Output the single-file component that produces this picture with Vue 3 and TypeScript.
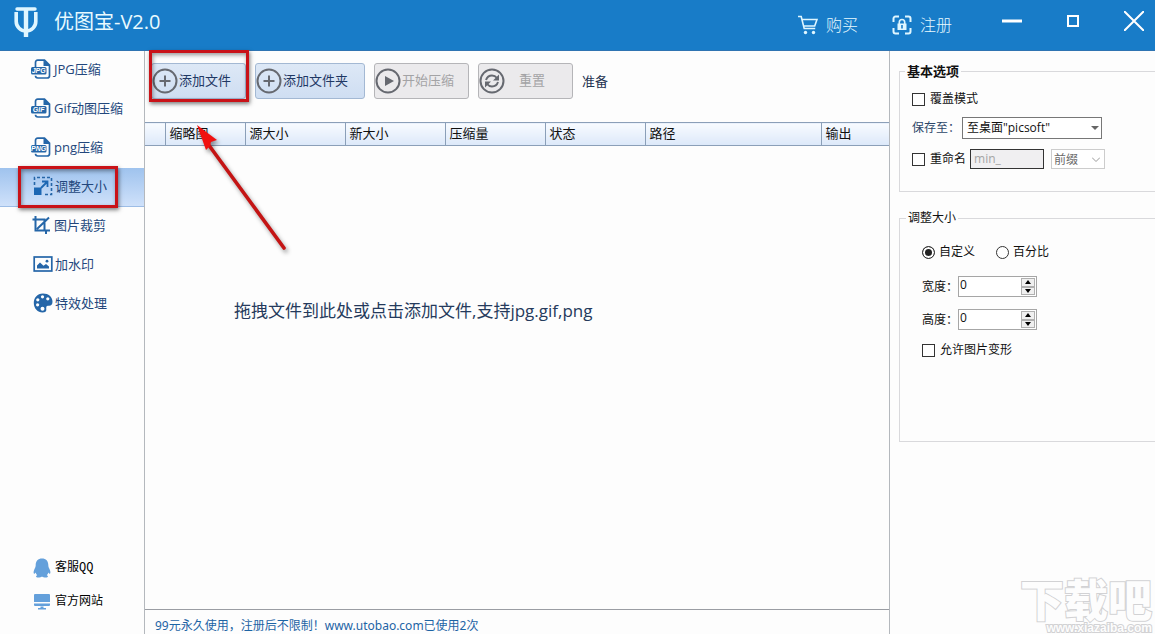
<script setup lang="ts">
import { ref } from 'vue'

type IconKind = 'file' | 'resize' | 'crop' | 'image' | 'palette'

interface NavItem {
  id: string
  label: string
  icon: IconKind
  tag?: string
}

const navItems: NavItem[] = [
  { id: 'jpg', label: 'JPG压缩', icon: 'file', tag: 'JPG' },
  { id: 'gif', label: 'Gif动图压缩', icon: 'file', tag: 'GIF' },
  { id: 'png', label: 'png压缩', icon: 'file', tag: 'PNG' },
  { id: 'resize', label: '调整大小', icon: 'resize' },
  { id: 'crop', label: '图片裁剪', icon: 'crop' },
  { id: 'watermark', label: '加水印', icon: 'image' },
  { id: 'effects', label: '特效处理', icon: 'palette' },
]

const columns = ['', '缩略图', '源大小', '新大小', '压缩量', '状态', '路径', '输出']

const active = ref('resize')
const overwrite = ref(false)
const saveTo = ref('至桌面"picsoft"')
const rename = ref(false)
const renameText = ref('min_')
const renameMode = ref('前缀')
const sizeMode = ref('custom')
const width = ref(0)
const height = ref(0)
const allowDistort = ref(false)
</script>

<template>
  <div class="app">
    <header class="titlebar">
      <div class="brand">
        <svg class="logo" viewBox="0 0 24 30" aria-hidden="true">
          <path d="M3 2h18" stroke="#dff6ff" stroke-width="3.400" stroke-linecap="round" />
          <path d="M2.200 5v9.500a9.800 9.500 0 0 0 19.600 0V5" fill="none" stroke="#dff6ff" stroke-width="3.600" />
          <path d="M12 2v28" stroke="#dff6ff" stroke-width="4.400" />
        </svg>
        <h1>优图宝-V2.0</h1>
      </div>
      <div class="links">
        <a href="#buy">
          <svg viewBox="0 0 20 20" aria-hidden="true">
            <path d="M0 1.500h3.200l3 12h11M4 4.500h15l-2.300 6.500H6" fill="none" stroke="#dff6ff" stroke-width="1.600" />
            <circle cx="7.500" cy="17.500" r="1.700" fill="#dff6ff" />
            <circle cx="15.500" cy="17.500" r="1.700" fill="#dff6ff" />
          </svg>
          购买
        </a>
        <a href="#register">
          <svg viewBox="0 0 20 20" aria-hidden="true">
            <path d="M7 1.500H3.500a2 2 0 0 0-2 2V7M13 1.500h3.500a2 2 0 0 1 2 2V7M7 18.500H3.500a2 2 0 0 1-2-2V13M13 18.500h3.500a2 2 0 0 0 2-2V13" fill="none" stroke="#dff6ff" stroke-width="2" />
            <path d="M7.300 9V7.200a2.700 2.700 0 0 1 5.400 0V9" fill="none" stroke="#dff6ff" stroke-width="1.600" />
            <path d="M5.500 8.500h9V15h-9z" fill="#dff6ff" />
            <path d="M10 10v3.500" stroke="#187cc8" stroke-width="1.600" />
          </svg>
          注册
        </a>
      </div>
      <div class="window-buttons">
        <button type="button" aria-label="最小化"><svg width="20" height="22" viewBox="0 0 20 22"><path d="M0 11h20" stroke="#fff" stroke-width="3" /></svg></button>
        <button type="button" aria-label="最大化"><svg width="12" height="12" viewBox="0 0 12 12"><path d="M1 1h10v10H1z" fill="none" stroke="#fff" stroke-width="2" /></svg></button>
        <button type="button" aria-label="关闭"><svg width="20" height="20" viewBox="0 0 20 20"><path d="M0 0l20 20M20 0L0 20" stroke="#fff" stroke-width="2" /></svg></button>
      </div>
    </header>

    <aside class="sidebar">
      <nav>
        <button
          v-for="item in navItems"
          :key="item.id"
          type="button"
          class="nav-item"
          :class="{ active: active === item.id }"
          @click="active = item.id"
        >
          <svg v-if="item.icon === 'file'" viewBox="0 0 20 20" aria-hidden="true">
            <path d="M4.500 8V3.500q0-2.300 2.300-2.300h6.700l5 5v10.500q0 2.300-2.300 2.300H6.800q-2.300 0-2.300-2.300" fill="none" stroke="#2566a8" stroke-width="1.700" />
            <path d="M12.500 1v6H19z" fill="#2566a8" />
            <rect x="0" y="8" width="15.500" height="7.500" rx="1.500" fill="#2566a8" />
            <text x="7.700" y="14.200" class="tag">{{ item.tag }}</text>
          </svg>
          <svg v-else-if="item.icon === 'resize'" class="shifted" viewBox="0 0 20 20" aria-hidden="true">
            <path d="M1.500 9V1.500H18.500V18.500H10" fill="none" stroke="#2566a8" stroke-width="1.600" stroke-dasharray="3 2" />
            <path d="M1 11.500h7.500V19H1z" fill="#1c67b3" />
            <path d="M8 12l6.500-6.500M9 5.500h5.500V11" fill="none" stroke="#1c67b3" stroke-width="1.800" />
          </svg>
          <svg v-else-if="item.icon === 'crop'" viewBox="0 0 20 20" aria-hidden="true">
            <path d="M4.500 1v14.500H19M1.500 4.500h12v11M15 15.500V19M6 14L18 2.500" fill="none" stroke="#2566a8" stroke-width="2" />
          </svg>
          <svg v-else-if="item.icon === 'image'" class="shifted" viewBox="0 0 20 20" aria-hidden="true">
            <rect x="1.200" y="3" width="17.600" height="14" fill="none" stroke="#2566a8" stroke-width="1.700" />
            <path d="M4 14.500v-3L7 8.500l3.500 3.200 2.500-1.700 3 2.500v2z" fill="#2566a8" />
            <circle cx="14" cy="7.200" r="1.400" fill="#2566a8" />
          </svg>
          <svg v-else class="shifted" viewBox="0 0 20 20" aria-hidden="true">
            <path d="M10 .5C4 .5.800 5 .800 10c0 5.500 4 9.500 8.700 9.500 2.700 0 4-1.200 3.800-3-.3-2.500 0-4 2.200-3.700 2.500.3 4-1.300 4-4C19.500 4 15.500.5 10 .5z" fill="#2566a8" />
            <g fill="#fff">
              <circle cx="9.500" cy="3.800" r="1.600" /><circle cx="14.800" cy="5.800" r="1.600" />
              <circle cx="4.800" cy="6.800" r="1.600" /><circle cx="4.600" cy="11.800" r="1.600" />
              <circle cx="9.500" cy="15.800" r="2" />
            </g>
          </svg>
          <span>{{ item.label }}</span>
          <i v-if="item.id === 'resize'" class="mark" aria-hidden="true"></i>
        </button>
      </nav>
      <div class="support">
        <a href="#qq">
          <svg viewBox="0 0 18 20" aria-hidden="true">
            <path d="M9 .5c-4 0-6.300 2.700-6.300 6.500 0 1.500-.4 2.500-1.200 4C.6 13 .3 15 .9 15.600c.5.300 1.200-.4 1.800-1.200.2 1.200.7 2 1.500 2.800-1.700.9-1.500 2.300 1 2.300 1.700 0 3-.4 3.800-1 .8.600 2.100 1 3.800 1 2.500 0 2.700-1.400 1-2.300.8-.8 1.300-1.600 1.500-2.800.6.800 1.300 1.500 1.800 1.200.6-.6.300-2.600-.6-4.600-.8-1.500-1.200-2.500-1.200-4C15.300 3.200 13 .5 9 .5z" fill="#64a0db" />
          </svg>
          客服QQ
        </a>
        <a href="#site">
          <svg viewBox="0 0 18 20" aria-hidden="true">
            <path d="M2 2h14q1 0 1 1v7H1V3q0-1 1-1zM1 11.500h16V13q0 1-1 1H2q-1 0-1-1zM7.500 14.500h3V16H13v1.500H5V16h2.500z" fill="#64a0db" />
          </svg>
          官方网站
        </a>
      </div>
    </aside>

    <main class="workspace">
      <div class="toolbar">
        <button type="button" class="tool">
          <svg viewBox="0 0 26 26" aria-hidden="true">
            <circle cx="13" cy="13" r="11.500" /><path d="M7.500 13h11M13 7.500v11" />
          </svg>
          <span>添加文件</span>
          <i class="mark" aria-hidden="true"></i>
        </button>
        <button type="button" class="tool wide">
          <svg viewBox="0 0 26 26" aria-hidden="true">
            <circle cx="13" cy="13" r="11.500" /><path d="M7.500 13h11M13 7.500v11" />
          </svg>
          <span>添加文件夹</span>
        </button>
        <button type="button" class="tool" disabled>
          <svg viewBox="0 0 26 26" aria-hidden="true">
            <circle cx="13" cy="13" r="11.500" /><path class="solid" d="M10 8l9 5-9 5z" />
          </svg>
          <span>开始压缩</span>
        </button>
        <button type="button" class="tool centered" disabled>
          <svg viewBox="0 0 26 26" aria-hidden="true">
            <circle cx="13" cy="13" r="11.500" />
            <path d="M7 12q1.500-4.500 6-4.500 3 0 5 2.500M19 14q-1.500 4.500-6 4.500-3 0-5-2.500" />
            <path class="solid" d="M20 6.500v6h-6zM6 19.500v-6h6z" />
          </svg>
          <span>重置</span>
        </button>
        <span class="status">准备</span>
      </div>

      <table class="files">
        <colgroup>
          <col class="c-index" /><col class="c-thumb" /><col class="c-data" /><col class="c-data" />
          <col class="c-data" /><col class="c-data" /><col /><col class="c-out" />
        </colgroup>
        <thead>
          <tr>
            <th v-for="(name, i) in columns" :key="i" scope="col">{{ name }}</th>
          </tr>
        </thead>
      </table>

      <div class="drop">
        <p>拖拽文件到此处或点击添加文件,支持jpg.gif,png</p>
      </div>

      <svg class="arrow" width="104" height="136" viewBox="0 0 104 136" aria-hidden="true">
        <path d="M19 26L95 130" stroke="#c41414" stroke-width="3.600" stroke-linecap="round" />
        <path d="M8 7l20 15-6 2-1 4-4 4z" fill="#f01010" />
      </svg>

      <footer class="notice">99元永久使用，注册后不限制！www.utobao.com已使用2次</footer>
    </main>

    <section class="options">
      <fieldset class="basic">
        <legend>基本选项</legend>
        <div class="row">
          <input id="overwrite" v-model="overwrite" type="checkbox" />
          <label for="overwrite">覆盖模式</label>
        </div>
        <div class="row save-row">
          <label for="save-to" class="tinted">保存至：</label>
          <span class="select save">
            <select id="save-to" v-model="saveTo">
              <option>至桌面"picsoft"</option>
              <option>至原目录</option>
            </select>
            <svg width="8" height="5" viewBox="0 0 8 5" aria-hidden="true"><path d="M0 0h8L4 4z" fill="#666" /></svg>
          </span>
        </div>
        <div class="row rename-row">
          <input id="rename" v-model="rename" type="checkbox" />
          <label for="rename">重命名</label>
          <input v-model="renameText" class="prefix" type="text" aria-label="重命名文字" disabled />
          <span class="select mode">
            <select v-model="renameMode" aria-label="重命名位置" disabled>
              <option>前缀</option>
              <option>后缀</option>
            </select>
            <svg width="8" height="5" viewBox="0 0 8 5" aria-hidden="true"><path d="M0 .500l4 4 4-4" fill="none" stroke="#999" /></svg>
          </span>
        </div>
      </fieldset>

      <fieldset class="sizing">
        <legend>调整大小</legend>
        <div class="row radios">
          <input id="mode-custom" v-model="sizeMode" type="radio" value="custom" />
          <label for="mode-custom">自定义</label>
          <input id="mode-percent" v-model="sizeMode" type="radio" value="percent" />
          <label for="mode-percent">百分比</label>
        </div>
        <div class="row dim">
          <label for="width">宽度：</label>
          <span class="spin">
            <input id="width" v-model.number="width" type="text" inputmode="numeric" />
            <span class="steps">
              <button type="button" aria-label="增加宽度" @click="width++"><svg width="6" height="4" viewBox="0 0 6 4"><path d="M0 4l3-4 3 4z" /></svg></button>
              <button type="button" aria-label="减少宽度" @click="width--"><svg width="6" height="4" viewBox="0 0 6 4"><path d="M0 0l3 4 3-4z" /></svg></button>
            </span>
          </span>
        </div>
        <div class="row dim">
          <label for="height">高度：</label>
          <span class="spin">
            <input id="height" v-model.number="height" type="text" inputmode="numeric" />
            <span class="steps">
              <button type="button" aria-label="增加高度" @click="height++"><svg width="6" height="4" viewBox="0 0 6 4"><path d="M0 4l3-4 3 4z" /></svg></button>
              <button type="button" aria-label="减少高度" @click="height--"><svg width="6" height="4" viewBox="0 0 6 4"><path d="M0 0l3 4 3-4z" /></svg></button>
            </span>
          </span>
        </div>
        <div class="row">
          <input id="distort" v-model="allowDistort" type="checkbox" />
          <label for="distort">允许图片变形</label>
        </div>
      </fieldset>
    </section>

    <div class="stamp" aria-hidden="true">
      <span class="stamp-name">下载吧</span>
      <span class="stamp-url">www.xiazaiba.com</span>
    </div>
  </div>
</template>

<style>
body {
  margin: 0;
}
</style>

<style scoped>
* {
  box-sizing: border-box;
}

.app {
  position: relative;
  display: grid;
  grid-template-columns: 145px minmax(0, 1fr) 266px;
  grid-template-rows: 51px 1fr;
  min-height: 100vh;
  background: #fdfdfd;
  color: #111;
  font: 13px/20px "Open Sans", "Noto Sans CJK SC", sans-serif;
  overflow: hidden;
}

button,
input,
select {
  margin: 0;
  padding: 0;
  border: 0;
  border-radius: 0;
  background: none;
  color: inherit;
  font: inherit;
}

svg {
  display: block;
  flex: none;
}

/* title bar */
.titlebar {
  grid-column: 1 / -1;
  display: flex;
  align-items: flex-start;
  padding: 0 11px 0 14px;
  background: #187cc8;
  border-bottom: 1px solid #2f74b2;
  color: #e8faff;
}

.brand {
  display: flex;
  align-items: center;
  gap: 16px;
  height: 43px;
}

.logo {
  width: 24px;
  height: 30px;
}

h1 {
  margin: 0;
  font-size: 20px;
  font-weight: 400;
  line-height: 26px;
}

.links {
  display: flex;
  gap: 34px;
  margin: 0 50px 0 auto;
}

.links a {
  display: flex;
  align-items: center;
  gap: 8px;
  height: 49px;
  color: inherit;
  font-size: 16px;
  font-weight: 300;
  text-decoration: none;
}

.links svg {
  width: 20px;
  height: 20px;
}

.window-buttons {
  display: flex;
  align-items: center;
  gap: 45px;
  height: 42px;
}

/* sidebar */
.sidebar {
  display: flex;
  flex-direction: column;
  justify-content: space-between;
  border-right: 1px solid #b4b8bd;
}

.nav-item {
  position: relative;
  display: flex;
  align-items: center;
  gap: 3px;
  width: 100%;
  height: 39px;
  padding: 0 0 2px 31px;
  border-bottom: 1px solid transparent;
  color: #23477c;
  white-space: nowrap;
}

.nav-item svg {
  width: 20px;
  height: 20px;
}

.nav-item .shifted {
  margin-left: 2px;
  margin-right: -1px;
}

.nav-item.active {
  background: linear-gradient(#9fc3ee, #cfe1fa);
  border-bottom-color: #9dbde6;
}

.tag {
  fill: #fff;
  font: italic bold 7px "Liberation Sans", sans-serif;
  text-anchor: middle;
}

.mark {
  position: absolute;
  border: 3px solid #c91218;
  box-shadow: 1px 2px 4px rgba(0, 0, 0, 0.5), inset 1px 2px 4px rgba(0, 0, 0, 0.4);
  pointer-events: none;
}

.nav-item .mark {
  inset: -2px 26px -2px 18px;
}

.support {
  display: flex;
  flex-direction: column;
  gap: 14px;
  padding: 0 0 22px 33px;
}

.support a {
  display: flex;
  align-items: center;
  gap: 4px;
  color: #000;
  font-family: "Liberation Mono", "Noto Sans CJK SC", monospace;
  font-size: 12px;
  text-decoration: none;
}

.support svg {
  width: 18px;
  height: 20px;
}

/* workspace */
.workspace {
  position: relative;
  display: flex;
  flex-direction: column;
}

.toolbar {
  display: flex;
  align-items: center;
  gap: 9px;
  padding: 12px 5px 23px 6px;
}

.tool {
  position: relative;
  display: flex;
  align-items: center;
  gap: 1px;
  width: 95px;
  height: 36px;
  border: 1px solid #a3b8d3;
  border-radius: 3px;
  background: linear-gradient(#dde8f6, #cfdef2);
  color: #1f3864;
  white-space: nowrap;
}

.tool.wide {
  width: 110px;
}

.tool svg {
  width: 26px;
  height: 26px;
  fill: none;
  stroke: #666970;
  stroke-width: 2;
}

.tool span {
  padding-bottom: 2px;
}

.tool .solid {
  fill: #666970;
  stroke: none;
}

.tool:disabled {
  border-color: #b5b5b8;
  background: #ebeaec;
  color: #a3a3a5;
}

.tool.centered span {
  flex: 1;
  padding-right: 14px;
  text-align: center;
}

.tool .mark {
  inset: -14px -4px -4px -3px;
}

.status {
  color: #1f3350;
}

.files {
  width: 100%;
  table-layout: fixed;
  border-collapse: collapse;
}

.files th {
  height: 23px;
  padding: 0 0 2px 4px;
  border: solid #8b9fb8;
  border-width: 1px 0 1px 1px;
  background: linear-gradient(#f8fbff, #dce8f9);
  color: #111;
  font-weight: 400;
  line-height: 20px;
  text-align: left;
}

.files th:first-child {
  border-left: 0;
}

.c-index {
  width: 20px;
}

.c-thumb {
  width: 80px;
}

.c-data {
  width: 100px;
}

.c-out {
  width: 68px;
}

.drop {
  flex: 1;
  padding: 151px 20px 0 89px;
}

.drop p {
  margin: 0;
  color: #253a5c;
  font-size: 17px;
  line-height: 28px;
}

.arrow {
  position: absolute;
  left: 44px;
  top: 67px;
  filter: drop-shadow(2px 3px 2px rgba(0, 0, 0, 0.4));
  pointer-events: none;
}

.notice {
  height: 25px;
  padding: 8px 10px 0;
  border-top: 1px solid #9a9da3;
  color: #1d64a5;
  font-family: "Noto Sans", "Noto Sans CJK SC", sans-serif;
  font-size: 12px;
  line-height: 16px;
  white-space: nowrap;
}

/* options */
.options {
  padding: 10px 0 0 9px;
  border-left: 1px solid #b4b8bd;
  font-size: 12px;
}

fieldset {
  min-width: 0;
  margin: 0;
  border: 1px solid #d9d9dc;
  border-right: 0;
}

legend {
  height: 20px;
  padding: 0 2px;
}

.basic {
  height: 131px;
  padding: 8px 0 0 12px;
}

.basic legend {
  margin-left: -7px;
  font-size: 13px;
  font-weight: 700;
}

.sizing {
  height: 234px;
  margin-top: 16px;
  padding: 14px 0 0 22px;
}

.sizing legend {
  margin-left: -16px;
}

.row {
  display: flex;
  align-items: center;
  height: 20px;
}

.row label {
  white-space: nowrap;
}

input[type="checkbox"],
input[type="radio"] {
  appearance: none;
  flex: none;
  width: 13px;
  height: 13px;
  margin-right: 5px;
  border: 1px solid #333;
  background: #fff;
}

input[type="checkbox"]:checked {
  background: #333;
  box-shadow: inset 0 0 0 2px #fff;
}

input[type="radio"] {
  margin-right: 4px;
  border-radius: 50%;
}

input[type="radio"]:checked {
  background: #222;
  box-shadow: inset 0 0 0 2px #fff;
}

.save-row {
  height: 22px;
  margin-top: 8px;
}

.tinted {
  width: 50px;
  color: #2c4668;
}

.select {
  position: relative;
  display: block;
}

.select select {
  appearance: none;
  width: 100%;
  height: 100%;
  padding-left: 4px;
  border: 1px solid #777;
  background: #fff;
  opacity: 1;
}

.select svg {
  position: absolute;
  right: 3px;
  top: 50%;
  margin-top: -2px;
  pointer-events: none;
}

.save {
  width: 140px;
  height: 22px;
}

.rename-row {
  margin-top: 10px;
}

.prefix {
  width: 74px;
  height: 20px;
  margin: 0 7px 0 4px;
  padding: 0 3px;
  border: 1px solid #333;
  background: #f0eff1;
  color: #a5a5a5;
}

.mode {
  width: 54px;
  height: 20px;
}

.mode select {
  padding-left: 2px;
  border-color: #ccc;
  color: #6a6a6a;
}

.mode svg {
  right: 5px;
}

.radios label {
  margin-right: 21px;
}

.dim {
  height: 21px;
  margin-top: 12px;
}

.radios + .dim {
  margin-top: 14px;
}

.dim label {
  width: 36px;
}

.dim + .row:last-child {
  margin-top: 10px;
}

.spin {
  display: flex;
  width: 79px;
  height: 21px;
  border: 1px solid #a6a6a6;
  background: #fff;
}

.spin input {
  flex: 1;
  min-width: 0;
  padding: 0 0 3px 1px;
  line-height: 16px;
}

.steps {
  display: flex;
  flex-direction: column;
  width: 15px;
  padding: 1px 1px 1px 0;
}

.steps button {
  display: flex;
  flex: 1;
  align-items: center;
  justify-content: center;
  border: 1px solid #b0b0b0;
  background: #f0f0f0;
}

/* corner stamp */
.stamp {
  position: absolute;
  right: 3px;
  bottom: 0;
  display: flex;
  flex-direction: column;
  align-items: flex-end;
  color: #fdfdfd;
  font-weight: 900;
  -webkit-text-stroke: 2px #d2d2d4;
  paint-order: stroke fill;
  pointer-events: none;
}

.stamp-name {
  font-size: 44px;
  line-height: 44px;
}

.stamp-url {
  font: bold 12px/12px "Liberation Sans", sans-serif;
}
</style>
